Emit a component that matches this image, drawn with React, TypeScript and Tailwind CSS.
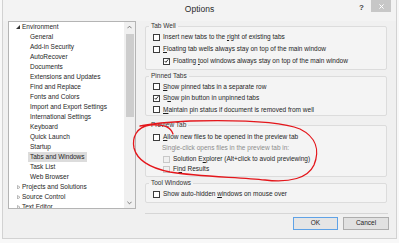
import React from 'react';

type Item = { label: string; level: 0 | 1; open?: boolean; selected?: boolean };

const TREE: Item[] = [
  { label: 'Environment', level: 0, open: true },
  { label: 'General', level: 1 },
  { label: 'Add-in Security', level: 1 },
  { label: 'AutoRecover', level: 1 },
  { label: 'Documents', level: 1 },
  { label: 'Extensions and Updates', level: 1 },
  { label: 'Find and Replace', level: 1 },
  { label: 'Fonts and Colors', level: 1 },
  { label: 'Import and Export Settings', level: 1 },
  { label: 'International Settings', level: 1 },
  { label: 'Keyboard', level: 1 },
  { label: 'Quick Launch', level: 1 },
  { label: 'Startup', level: 1 },
  { label: 'Tabs and Windows', level: 1, selected: true },
  { label: 'Task List', level: 1 },
  { label: 'Web Browser', level: 1 },
  { label: 'Projects and Solutions', level: 0 },
  { label: 'Source Control', level: 0 },
  { label: 'Text Editor', level: 0 },
];

const Check = ({ checked, disabled }: { checked?: boolean; disabled?: boolean }) => (
  <span
    className={`flex items-center justify-center shrink-0 w-[7px] h-[7px] border ${
      disabled ? 'border-[#c8c8c8] bg-[#f0f0f0]' : 'border-[#3c3c3c] bg-white'
    }`}
  >
    {checked && (
      <svg viewBox="0 0 6 6" className="w-[6px] h-[6px]">
        <path d="M0.8 3 L2.3 4.6 L5.2 0.9" fill="none" stroke="#1e1e1e" strokeWidth="1.1" />
      </svg>
    )}
  </span>
);

const Row = ({
  children,
  checked,
  disabled,
  indent,
  h,
}: {
  children: React.ReactNode;
  checked?: boolean;
  disabled?: boolean;
  indent?: boolean;
  h: string;
}) => (
  <div className={`flex items-center gap-[3px] ${indent ? 'pl-[17px]' : 'pl-[7px]'} ${h}`}>
    <Check checked={checked} disabled={disabled} />
    <span className="leading-none whitespace-nowrap">{children}</span>
  </div>
);

const U = ({ children }: { children: React.ReactNode }) => <span className="underline underline-offset-[1px]">{children}</span>;

export default function App() {
  return (
    <div className="relative w-[399px] h-[243px] bg-[#f8f8f8] overflow-hidden font-['Liberation_Sans',Arial,sans-serif] text-[6.5px] text-[#1e1e1e]">
      <div className="mx-[2px] h-[239px] bg-[#f0f0f0] border-x border-b border-[#d2d2d2] flex flex-col">
        {/* title bar */}
        <div className="h-[21px] grid grid-cols-[1fr_auto_1fr] bg-[#f3f3f3]">
          <div />
          <div className="flex items-center h-[18px] text-[8.5px] text-[#2a2a2a]">Options</div>
          <div className="flex justify-end items-start gap-[7px] pr-[5px]">
            <span className="mt-[4px] text-[8px] font-bold leading-none text-[#444]">?</span>
            <span className="w-[20px] h-[12px] bg-[#c7c7c7] flex items-center justify-center">
              <svg viewBox="0 0 6 6" className="w-[5px] h-[5px]">
                <path d="M0.5 0.5 L5.5 5.5 M5.5 0.5 L0.5 5.5" stroke="#fff" strokeWidth="1.2" />
              </svg>
            </span>
          </div>
        </div>

        <div className="flex items-start">
          {/* tree */}
          <div className="ml-[5px] w-[128px] h-[188px] border border-[#b4b4b4] bg-white flex overflow-hidden">
            <div className="flex-1 min-w-0">
              {TREE.map((it) => (
                <div key={it.label} className="h-[10px] flex items-center">
                  {it.level === 0 ? (
                    <span className="w-[13px] flex justify-end pr-[2px]">
                      {it.open ? (
                        <svg viewBox="0 0 4 4" className="w-[4px] h-[4px]">
                          <path d="M4 0 L4 4 L0 4 Z" fill="#333" />
                        </svg>
                      ) : (
                        <svg viewBox="0 0 4 5" className="w-[3.5px] h-[4.5px]">
                          <path d="M0.5 0.5 L3.5 2.5 L0.5 4.5 Z" fill="none" stroke="#9a9a9a" strokeWidth="0.8" />
                        </svg>
                      )}
                    </span>
                  ) : (
                    <span className="w-[21px]" />
                  )}
                  <span
                    className={`leading-none whitespace-nowrap ${
                      it.selected ? 'bg-[#dcdcdc] px-[2px] -ml-[2px] h-[10px] flex items-center' : ''
                    }`}
                  >
                    {it.label}
                  </span>
                </div>
              ))}
            </div>
            <div className="w-[11px] bg-[#f0f0f0] flex flex-col items-center">
              <svg viewBox="0 0 6 4" className="w-[5px] h-[4px] mt-[3px]">
                <path d="M0.5 3.5 L3 1 L5.5 3.5" fill="none" stroke="#555" strokeWidth="0.9" />
              </svg>
              <div className="w-[8px] h-[83px] mt-[5px] bg-[#cdcdcd]" />
              <div className="flex-1" />
              <svg viewBox="0 0 6 4" className="w-[5px] h-[4px] mb-[3px]">
                <path d="M0.5 0.5 L3 3 L5.5 0.5" fill="none" stroke="#555" strokeWidth="0.9" />
              </svg>
            </div>
          </div>

          {/* right panel */}
          <div className="ml-[9px] w-[244px] flex flex-col">
            <fieldset className="h-[49px] mr-[2px] border border-[#dcdcdc] rounded-[2px] bg-[#f4f4f4]">
              <legend className="ml-[3px] px-[2px] h-[10px] leading-[10px] text-[#333]">Tab Well</legend>
              <Row h="h-[12px]">Insert new tabs to the <U>r</U>ight of existing tabs</Row>
              <Row h="h-[12px]"><U>F</U>loating tab wells always stay on top of the main window</Row>
              <Row h="h-[12px]" indent checked>Floating <U>t</U>ool windows always stay on top of the main window</Row>
            </fieldset>

            <fieldset className="mt-[1px] h-[45px] mr-[2px] border border-[#dcdcdc] rounded-[2px] bg-[#f4f4f4]">
              <legend className="ml-[3px] px-[2px] h-[10px] leading-[10px] text-[#333]">Pinned Tabs</legend>
              <Row h="h-[11.5px]"><U>S</U>how pinned tabs in a separate row</Row>
              <Row h="h-[11.5px]" checked>S<U>h</U>ow pin button in unpinned tabs</Row>
              <Row h="h-[11.5px]"><U>M</U>aintain pin status if document is removed from well</Row>
            </fieldset>

            <fieldset className="mt-[4px] h-[57px] mr-[2px] border border-[#dcdcdc] rounded-[2px] bg-[#f4f4f4]">
              <legend className="ml-[3px] px-[2px] h-[10px] leading-[10px] text-[#333]">Preview Tab</legend>
              <div className="mt-[1px]" />
              <Row h="h-[12px]"><U>A</U>llow new files to be opened in the preview tab</Row>
              <div className="h-[11px] pl-[16px] flex items-center leading-none text-[#8c8c8c]">
                Single-click opens files in the preview tab in:
              </div>
              <Row h="h-[10px]" indent disabled>Solution E<U>x</U>plorer (Alt+click to avoid previewing)</Row>
              <Row h="h-[10px]" indent disabled>Fi<U>n</U>d Results</Row>
            </fieldset>

            <fieldset className="mt-[1px] h-[25px] mr-[2px] border border-[#dcdcdc] rounded-[2px] bg-[#f4f4f4]">
              <legend className="ml-[3px] px-[2px] h-[10px] leading-[10px] text-[#333]">Tool Windows</legend>
              <Row h="h-[12px]">Show auto-hidden <U>w</U>indows on mouse over</Row>
            </fieldset>

            <div className="mt-[10px] mr-[1px] border-t border-[#d6d6d6]" />

            <div className="mt-[3px] flex justify-end gap-[5px]">
              <button className="w-[45px] h-[13px] border border-[#5fa2e6] bg-[#e5e5e5] text-[6.5px] leading-none text-[#1e1e1e]">
                OK
              </button>
              <button className="w-[46px] h-[13px] border border-[#adadad] bg-[#e1e1e1] text-[6.5px] leading-none text-[#1e1e1e]">
                Cancel
              </button>
            </div>
          </div>
        </div>
      </div>

      {/* hand-drawn annotation */}
      <svg className="absolute inset-0 pointer-events-none" width="399" height="243" viewBox="0 0 399 243">
        <path
          d="M173,134 C171,128 166,124 150,125 C136,127 132,138 134,148 C137,160 150,168 170,172 C200,177 240,177 265,180 C290,183 308,178 314,165 C320,150 316,137 300,129 C280,121 230,120 190,121 C170,122 155,123 140,126"
          fill="none"
          stroke="#e4161b"
          strokeWidth="1.3"
          strokeLinecap="round"
        />
      </svg>
    </div>
  );
}
